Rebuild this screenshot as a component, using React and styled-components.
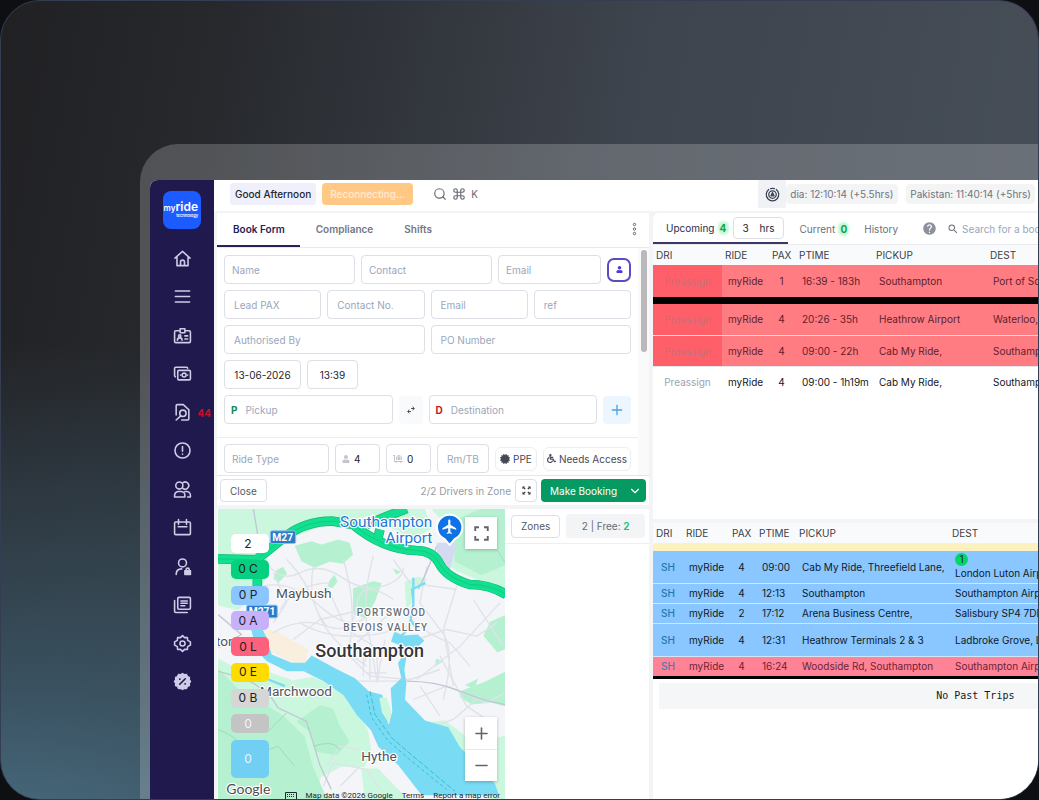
import React, { useState } from 'react';
import styled, { createGlobalStyle, css } from 'styled-components';
import { FaWheelchair, FaCertificate, FaLuggageCart, FaUser } from 'react-icons/fa';
import { FiSearch } from 'react-icons/fi';
import { Command, ChevronDown, Plus, Minus } from 'lucide-react';
import { MdHelp, MdSearch, MdFlight } from 'react-icons/md';

const GlobalStyle = createGlobalStyle`
  * {
    box-sizing: border-box;
  }
  body {
    margin: 0;
    background: #0e0f12;
    font-family: Inter, 'Liberation Sans', sans-serif;
    font-size: 10px;
    line-height: 14px;
    color: #23262f;
  }
  button, input {
    font: inherit;
    color: inherit;
    margin: 0;
  }
  svg {
    display: block;
  }
`;

const Stage = styled.div`
  display: flex;
  height: 100vh;
  padding: 143px 0 0 139px;
  overflow: hidden;
  border: 1px solid #343d52;
  border-radius: 40px;
  background:
    radial-gradient(ellipse 900px 520px at 0% 108%, #4b7186 0%, rgba(66, 98, 117, 0.7) 35%, rgba(50, 70, 85, 0) 100%),
    linear-gradient(100deg, #212124 0%, #26282c 18%, #3e444d 55%, #48505a 100%);
`;

const Device = styled.div`
  display: flex;
  flex: 1;
  min-width: 0;
  padding: 36px 0 0 10px;
  border-top-left-radius: 38px;
  background: rgba(255, 255, 255, 0.2);
`;

const Screen = styled.div`
  display: flex;
  flex: 1;
  min-width: 0;
  overflow: hidden;
  border-top-left-radius: 8px;
  background: #f3f4f6;
`;

const Sidebar = styled.nav`
  display: flex;
  flex-direction: column;
  align-items: center;
  flex: 0 0 64px;
  padding-top: 11px;
  background: #1f194d;
`;

const Logo = styled.a`
  display: flex;
  flex-direction: column;
  align-items: flex-end;
  width: 38px;
  height: 38px;
  margin-bottom: 20px;
  padding: 10px 3px 0 0;
  border-radius: 8px;
  background: #1c5bff;
  color: #fff;
  font-weight: 600;
  line-height: 12px;
  text-decoration: none;
  white-space: nowrap;
`;

const LogoMain = styled.span`
  font-size: 12px;
`;

const LogoSmall = styled.span`
  font-size: 8px;
`;

const LogoSub = styled.span`
  font-size: 4px;
  line-height: 4px;
`;

const NavList = styled.div`
  display: flex;
  flex-direction: column;
  justify-content: space-between;
  height: 442px;
`;

const NavLink = styled.a`
  position: relative;
  color: #cdcbe6;
`;

const NavBadge = styled.span`
  position: absolute;
  top: 3px;
  left: 25px;
  color: #c8102e;
  font-weight: 700;
`;

const Content = styled.div`
  display: flex;
  flex: 1;
  min-width: 0;
  flex-direction: column;
`;

const TopBar = styled.header`
  display: flex;
  align-items: center;
  flex: 0 0 31px;
  margin-bottom: 2px;
  padding: 0 3px 3px 16px;
  background: #fff;
  white-space: nowrap;
  overflow: hidden;
`;

const Greeting = styled.span`
  padding: 4px 5px;
  border-radius: 3px;
  background: #eff0fc;
  font-weight: 500;
`;

const Reconnecting = styled.span`
  margin: 0 20px 0 6px;
  padding: 4px 8px;
  border-radius: 4px;
  background: #ffc985;
  color: #ffe9cf;
  font-weight: 500;
`;

const Shortcut = styled.button`
  display: flex;
  align-items: center;
  gap: 5px;
  padding: 0;
  border: 0;
  background: none;
  color: #666a73;
`;

const ClockGroup = styled.div`
  display: flex;
  align-items: center;
  margin-left: auto;
  color: #6f747e;
`;

const ClockIcon = styled.span`
  display: flex;
  align-items: center;
  justify-content: center;
  width: 28px;
  height: 28px;
  background: #f1f2f5;
  color: #3b4055;
`;

const Clock = styled.span`
  margin-right: 8px;
  padding: 3px 5px 3px 4px;
  border-radius: 4px;
  background: #f3f4f6;

  &:last-child {
    margin-right: 0;
    padding: 3px 4px;
  }
`;

const Workspace = styled.main`
  display: grid;
  grid-template-columns: minmax(0, 432fr) minmax(0, 385fr);
  gap: 4px;
  flex: 1;
  min-height: 0;
  padding-left: 3px;
`;

const Column = styled.div`
  display: flex;
  flex-direction: column;
  gap: 4px;
  min-width: 0;
  min-height: 0;
`;

const Card = styled.section`
  display: flex;
  flex-direction: column;
  overflow: hidden;
  background: #fff;
`;

const Tabs = styled.div`
  display: flex;
  align-items: center;
  height: 35px;
  border-bottom: 1px solid #e8eaee;
`;

const Tab = styled.button`
  align-self: stretch;
  padding: 0 15px 0 16px;
  border: 0;
  border-bottom: 2px solid ${(p) => (p.$active ? '#292258' : 'transparent')};
  background: none;
  color: ${(p) => (p.$active ? '#292258' : '#727782')};
  font-weight: 600;
`;

const MoreButton = styled.button`
  display: flex;
  margin-left: auto;
  padding: 0 12px 3px;
  border: 0;
  background: none;
  color: #666a73;
`;

const FormBody = styled.div`
  display: flex;
`;

const FormRows = styled.form`
  flex: 1;
  min-width: 0;
  padding-top: 7px;
`;

const ScrollTrack = styled.div`
  flex: 0 0 11px;
  padding: 2px 2px 0 3px;
  background: #fafafb;
`;

const ScrollThumb = styled.div`
  height: 102px;
  border-radius: 3px;
  background: #b9b9bb;
`;

const Row = styled.div`
  display: grid;
  grid-template-columns: ${(p) => p.$cols};
  align-items: center;
  gap: 6px;
  padding: 0 7px 6px;
`;

const RideRow = styled(Row)`
  margin-top: 7px;
  padding: 6px 7px 2px;
  border-top: 1px solid #eceef1;
`;

const box = css`
  width: 100%;
  min-width: 0;
  height: 29px;
  border: 1px solid #dcdfe5;
  border-radius: 4px;
  background: #fff;
`;

const Input = styled.input`
  ${box}
  padding: 0 ${(p) => (p.$first ? 7 : 9)}px;
  text-align: ${(p) => (p.$center ? 'center' : 'left')};

  &::placeholder {
    color: #9aa6ba;
    opacity: 1;
  }
`;

const Field = styled.label`
  ${box}
  display: flex;
  align-items: center;
  gap: ${(p) => p.$gap || 4}px;
  padding: 0 6px;
  color: #c3c6cc;

  svg {
    flex-shrink: 0;
  }
`;

const FieldMark = styled.b`
  color: ${(p) => p.$color};
`;

const BareInput = styled.input`
  width: 100%;
  min-width: 0;
  padding: 0;
  border: 0;
  background: none;
  color: #23262f;

  &::placeholder {
    color: #9aa6ba;
    opacity: 1;
  }
`;

const IconButton = styled.button`
  display: flex;
  align-items: center;
  justify-content: center;
  width: 100%;
  height: ${(p) => p.$h || 28}px;
  padding: 0;
  border: ${(p) => p.$border || '0'};
  border-radius: ${(p) => p.$radius || 4}px;
  background: ${(p) => p.$bg || '#fff'};
  color: ${(p) => p.$color};
`;

const Option = styled.button`
  display: flex;
  align-items: center;
  justify-content: center;
  gap: 3px;
  height: 24px;
  padding: 0;
  border: 1px solid #eceef2;
  border-radius: 6px;
  background: #fff;
  color: #454954;
  white-space: nowrap;
`;

const FormFooter = styled.div`
  display: flex;
  align-items: center;
  gap: 4px;
  height: 30px;
  padding: 0 3px;
  border-top: 1px solid #e3e5e9;
  white-space: nowrap;
`;

const OutlineButton = styled.button`
  height: 23px;
  padding: 0 9px;
  border: 1px solid #dcdfe5;
  border-radius: 4px;
  background: #fff;
  color: #555a65;
`;

const Drivers = styled.span`
  margin-left: auto;
  color: #979ba3;
`;

const ExpandWrap = styled.div`
  width: 22px;
`;

const BookButton = styled.button`
  display: flex;
  align-items: center;
  justify-content: space-between;
  width: 105px;
  height: 23px;
  padding: 0 4px 0 9px;
  border: 0;
  border-radius: 4px;
  background: #069a62;
  color: #fff;
`;

const MapArea = styled.div`
  display: grid;
  grid-template-columns: minmax(0, 288fr) minmax(0, 144fr);
  flex: 1;
  min-height: 0;
  background: #fff;
`;

const MapBox = styled.div`
  position: relative;
  overflow: hidden;
  margin-left: 1px;
`;

const MapSvg = styled.svg`
  width: 100%;
  height: 100%;
  font-family: Roboto, sans-serif;
`;

const Counts = styled.div`
  position: absolute;
  top: 25px;
  left: 13px;
  display: flex;
  flex-direction: column;
  justify-content: space-between;
  width: 38px;
  height: 244px;
`;

const Count = styled.button`
  height: ${(p) => (p.$tall ? 38 : 19)}px;
  padding: 0 4px 0 0;
  border: 0;
  border-radius: 5px;
  background: ${(p) => p.$bg};
  color: ${(p) => p.$color || '#1d1f24'};
  font-size: 12px;
`;

const MapControl = styled.div`
  position: absolute;
  right: 8px;
  top: ${(p) => p.$top || 'auto'};
  bottom: ${(p) => p.$bottom || 'auto'};
  width: 32px;
  background: #fff;
  box-shadow: 0 1px 3px rgba(0, 0, 0, 0.25);

  button + button {
    border-top: 1px solid #e8e8e8;
  }
`;

const Attribution = styled.div`
  position: absolute;
  right: 5px;
  bottom: -3px;
  display: flex;
  align-items: center;
  gap: 9px;
  color: #22262c;
  font-family: Roboto, sans-serif;
  font-size: 8px;
  line-height: 12px;
  white-space: nowrap;

  a {
    color: inherit;
    text-decoration: none;
  }
`;

const Zones = styled.div`
  display: flex;
  align-items: center;
  gap: 6px;
  height: 35px;
  padding: 0 4px 0 6px;
  border-bottom: 1px solid #eceef1;
  white-space: nowrap;
`;

const FreeCount = styled.span`
  flex: 1;
  padding: 5px 0;
  border-radius: 4px;
  background: #f3f4f6;
  color: #666b75;
  text-align: center;

  b {
    color: #0fc07a;
    font-weight: 600;
  }
`;

const TripTabs = styled.div`
  display: flex;
  align-items: center;
  height: 32px;
  border-bottom: 1px solid #e8eaee;
  white-space: nowrap;
`;

const TripActive = styled.div`
  display: flex;
  align-items: center;
  align-self: stretch;
  padding: 0 4px 0 8px;
  border-bottom: 2px solid #3b3867;
`;

const TripTab = styled.button`
  display: flex;
  align-items: center;
  gap: 4px;
  padding: ${(p) => (p.$active ? '0 5px' : '0 4px 0 12px')};
  border: 0;
  background: none;
  color: ${(p) => (p.$active ? '#2d2b4e' : '#6c717b')};
`;

const Total = styled.b`
  width: 9px;
  border-radius: 5px;
  background: #c6f9d8;
  box-shadow: 0 0 3px 1px #c6f9d8;
  color: #10a34a;
  line-height: 12px;
`;

const Hours = styled.label`
  display: flex;
  align-items: center;
  width: 51px;
  height: 22px;
  padding: 0 8px 0 9px;
  border: 1px solid #dcdfe5;
  border-radius: 4px;
`;

const TripSearch = styled.label`
  display: flex;
  flex: 1;
  align-items: center;
  gap: 3px;
  min-width: 0;
  margin-left: 10px;
  color: #6c717b;

  svg {
    flex-shrink: 0;
  }
`;

const HelpButton = styled.button`
  display: flex;
  margin-left: 20px;
  padding: 0;
  border: 0;
  background: none;
  color: #8c919b;
`;

const Table = styled.table`
  width: 100%;
  table-layout: fixed;
  border-collapse: collapse;
  white-space: nowrap;
`;

const Th = styled.th`
  height: 20px;
  padding: 0 0 0 3px;
  background: #f8fafc;
  color: #3a3e48;
  font-weight: 400;
  text-align: left;
`;

const Tr = styled.tr`
  height: ${(p) => p.$h}px;
  background: ${(p) => p.$bg};
  color: ${(p) => p.$color || '#14161c'};
  border-bottom: ${(p) => p.$line || '1px solid #e2e5ea'};
`;

const Td = styled.td`
  padding: 0 0 0 6px;
  overflow: hidden;
  text-align: left;
`;

const PaxTd = styled(Td)`
  padding: 0 2px 0 0;
  text-align: center;
`;

const DriverTd = styled(Td)`
  padding: 0;
  background: ${(p) => p.$bg || 'transparent'};
  color: ${(p) => p.$color};
  font-weight: ${(p) => p.$weight || 400};
  text-align: center;
`;

const StopBadge = styled.span`
  display: block;
  width: 13px;
  height: 13px;
  border-radius: 50%;
  background: #00d768;
  line-height: 13px;
  text-align: center;
`;

const UpcomingCard = styled(Card)`
  flex: 0 0 306px;
  border-top-left-radius: 6px;
`;

const ActiveCard = styled(Card)`
  flex: 1;
`;

const NoTrips = styled.p`
  margin: 4px 0 0 6px;
  padding: 6px 0 6px 72%;
  background: #f5f6f7;
  color: #17191e;
  font-family: 'DejaVu Sans Mono', monospace;
  white-space: nowrap;
`;

const stroke = {
  fill: 'none',
  stroke: 'currentColor',
  strokeWidth: 2,
  strokeLinejoin: 'round',
  strokeLinecap: 'round',
};

const navItems = [
  {
    name: 'Home',
    icon: <path d="M2.500 11.500 12 3l9.500 8.500M5 10v11h14V10M9.500 21v-4.500a2.500 2.500 0 0 1 5 0V21" />,
  },
  { name: 'Bookings', icon: <path d="M3 5h18M3 12h18M3 19h18" /> },
  {
    name: 'Drivers',
    icon: (
      <>
        <path d="M9 6H3.500A1.500 1.500 0 0 0 2 7.500v12A1.500 1.500 0 0 0 3.500 21h17a1.500 1.500 0 0 0 1.500-1.500v-12A1.500 1.500 0 0 0 20.500 6H15M9 3.500h6v5H9zM15 12.500h3.500M15 16.500h3.500" />
        <circle cx="8.500" cy="12.500" r="1.500" />
        <path d="M5.500 18c0-4 6-4 6 0" />
      </>
    ),
  },
  {
    name: 'Payments',
    icon: (
      <>
        <rect x="6" y="8" width="16" height="12" rx="1.500" />
        <path d="M3 16a1.500 1.500 0 0 1-1-1.500v-9A1.500 1.500 0 0 1 3.500 4H17a1.500 1.500 0 0 1 1.500 1.500M9.500 14h.1M18.500 14h.1" />
        <circle cx="14" cy="14" r="2.500" />
      </>
    ),
  },
  {
    name: 'Reports',
    badge: '44',
    icon: (
      <>
        <path d="M4 15V3.500A1.500 1.500 0 0 1 5.500 2H13l7 6.500v11.500a1.500 1.500 0 0 1-1.500 1.500H11M4 21.500l5.500-5" />
        <circle cx="12.500" cy="13" r="4" />
      </>
    ),
  },
  {
    name: 'Alerts',
    icon: (
      <>
        <circle cx="12" cy="12" r="9.500" />
        <path d="M12 7v6M12 16.500v.3" />
      </>
    ),
  },
  {
    name: 'Customers',
    icon: (
      <>
        <circle cx="8" cy="7" r="4.500" />
        <path d="M12.500 3.500a4.500 4.500 0 1 1 0 7M2 21.500v-2a5 5 0 0 1 5-5h3a5 5 0 0 1 5 5v2zM15 14.500h2a5 5 0 0 1 5 5v2h-3.500" />
      </>
    ),
  },
  {
    name: 'Calendar',
    icon: <path d="M3.500 5h17A1.500 1.500 0 0 1 22 6.500v13a1.500 1.500 0 0 1-1.500 1.500h-17A1.500 1.500 0 0 1 2 19.500v-13A1.500 1.500 0 0 1 3.500 5zM7 2v6M17 2v6M6.500 11h11" />,
  },
  {
    name: 'Permissions',
    icon: (
      <>
        <circle cx="12" cy="7.500" r="5" />
        <path d="M4 22c0-4 2.500-7 7-7" />
        <path fill="currentColor" d="M15 17.500h7v4.500h-7z" />
        <path d="M16.500 17v-1a2 2 0 0 1 4 0v1" />
      </>
    ),
  },
  {
    name: 'Documents',
    icon: <path d="M7.500 3h13A1.500 1.500 0 0 1 22 4.500v12a1.500 1.500 0 0 1-1.500 1.500h-13A1.500 1.500 0 0 1 6 16.500v-12A1.500 1.500 0 0 1 7.500 3zM2 7v13.500A1.500 1.500 0 0 0 3.500 22H18M10 7.500h8M10 10.500h8M10 13.500h5" />,
  },
  {
    name: 'Settings',
    icon: (
      <>
        <path d="m12 2 2.600 2.600 3.600-.2.300 3.600L22 10v4l-3.500 2-.3 3.600-3.600-.2L12 22l-2.600-2.600-3.600.2-.3-3.600L2 14v-4l3.500-2 .3-3.600 3.600.2z" />
        <circle cx="12" cy="12" r="3.200" />
      </>
    ),
  },
  {
    name: 'Offers',
    icon: (
      <>
        <path
          fill="currentColor"
          d="m12 2 2.200 1.600 2.800-.3 1.100 2.600 2.600 1.100-.3 2.800L22 12l-1.600 2.200.3 2.800-2.600 1.100-1.100 2.600-2.800-.3L12 22l-2.200-1.600-2.800.3-1.100-2.600-2.600-1.100.3-2.800L2 12l1.600-2.200-.3-2.800 2.600-1.100L7 3.300l2.800.3z"
        />
        <path stroke="#1f194d" d="m8.500 15.500 7-7M8.500 9h.3M15.200 15h.3" />
      </>
    ),
  },
];

const upcoming = [
  { pax: 1, time: '16:39 - 183h', pickup: 'Southampton', dest: 'Port of Southampton', late: true, h: 35, line: '7px solid #000' },
  { pax: 4, time: '20:26 - 35h', pickup: 'Heathrow Airport', dest: 'Waterloo, London', late: true, h: 35 },
  { pax: 4, time: '09:00 - 22h', pickup: 'Cab My Ride,', dest: 'Southampton', late: true, h: 31 },
  { pax: 4, time: '09:00 - 1h19m', pickup: 'Cab My Ride,', dest: 'Southampton', h: 31, line: '0' },
];

const active = [
  { pax: 4, time: '09:00', pickup: 'Cab My Ride, Threefield Lane,', dest: 'London Luton Airport', stop: 1, h: 32 },
  { pax: 4, time: '12:13', pickup: 'Southampton', dest: 'Southampton Airport', h: 20 },
  { pax: 2, time: '17:12', pickup: 'Arena Business Centre,', dest: 'Salisbury SP4 7DE', h: 20 },
  { pax: 4, time: '12:31', pickup: 'Heathrow Terminals 2 & 3', dest: 'Ladbroke Grove, London', h: 33 },
  { pax: 4, time: '16:24', pickup: 'Woodside Rd, Southampton', dest: 'Southampton Airport', h: 21, pink: true },
];

const counts = [
  { label: '2', bg: '#fff' },
  { label: '0 C', bg: '#05d07f' },
  { label: '0 P', bg: '#8bc5ff' },
  { label: '0 A', bg: '#c8b1fb' },
  { label: '0 L', bg: '#ff607b' },
  { label: '0 E', bg: '#ffdc00' },
  { label: '0 B', bg: '#d6d6d6' },
  { label: '0', bg: '#c4c4c4', color: '#f4f4f4' },
  { label: '0', bg: '#70cff3', color: '#e9f8ff', tall: true },
];

const headings = ['DRI', 'RIDE', 'PAX', 'PTIME', 'PICKUP', 'DEST'];

const TableHead = ({ widths }) => (
  <>
    <colgroup>
      {widths.map((w, i) => (
        <col key={headings[i]} width={w} />
      ))}
      <col />
    </colgroup>
    <thead>
      <tr>
        {headings.map((h) => (
          <Th key={h} scope="col">{h}</Th>
        ))}
      </tr>
    </thead>
  </>
);

const ExpandIcon = ({ size }) => (
  <svg width={size} height={size} viewBox="0 0 24 24" fill="none" stroke="currentColor" strokeWidth="3">
    <path d="M2 8V2h6M16 2h6v6M22 16v6h-6M8 22H2v-6" />
  </svg>
);

const ArrowsIcon = () => (
  <svg width="9" height="9" viewBox="0 0 20 20" fill="currentColor">
    <path d="M1 1h6L5 3l3 3-2 2-3-3-2 2zM19 1v6l-2-2-3 3-2-2 3-3-2-2zM19 19h-6l2-2-3-3 2-2 3 3 2-2zM1 19v-6l2 2 3-3 2 2-3 3 2 2z" />
  </svg>
);

const motorway = 'M234 178l115 3 90-72q60-45 140-44l60 10q90 75 190 78 50 0 70 40t90 62q60 0 110 30';

const CityMap = () => (
  <MapSvg viewBox="234 27 861 873" preserveAspectRatio="xMidYMid slice" role="img" aria-label="Map of Southampton">
    <path fill="#f4f5f8" d="M234 27h861v873H234z" />
    <g transform="translate(234 27)">
      <g fill="#cbf7de">
        <path d="M0 0h560L470 20 330 45 215 90l-70 60 5 50-30 50-60 55-60-15zM640 0h221v240l-91-30-50-20-45-30 15-100z" />
        <path d="M500 50l90 40 50-30-20-60h-90z" />
        <path d="M0 450l60 30 45-15 60 30 60 20 60-10 105 50 60 110 10 60-20 50-70 0-60 30-20 60 30 38H0z" />
        <path d="M640 640l40-5 60 45 60 20 61-20v193h-50l-60-110-60-70zM560 220l40-15 30 8-40 20-10 50-15 20z" />
        <path d="M430 780l50 0 90 93H440z" />
      </g>
      <g fill="#b5f1d0">
        <path d="M230 112l50-14 30 10 50-15 35 10 10 35-30 28-40-6-45 18-40-20zM175 185l20-10 12 20-25 28-16-12zM335 215l14-16 10 20-16 20-14-6z" />
        <path d="M405 240l60-22 26 6-20 56-28 50-38-15zM861 320l-45 20-20 42 42 50 23-10zM861 490l-60 30-75 28 0 18 35 22 60-6 40 12z" />
        <path d="M0 480l60 60 70 40 70 45 60 60 25 90 35 80 18 18H0z" />
        <path d="M235 640l70-50 40 10 20 50 30 50-40 40-60-10-20-60z" />
        <path d="M700 40l90-40h71v170l-70 30-80-40zM655 450l20 10-25 15zM525 180l25 10-15 8zM740 530l40-20-10 30z" />
      </g>
    </g>
    <path fill="#f9efdf" d="M350 385l60 10 95 55-10 50-25-5-90-45z" />
    <path fill="#d5daf2" d="M890 130l60 0-20 80-40-20z" />
    <g fill="none" stroke="#e0e2ea" strokeWidth="4" strokeLinejoin="round">
      <path d="M380 190q40 60 100 30t120 10q70 50 130 30t60-56M420 330q50-80 150-80M400 400q80-50 160-20t90-60 110-20" />
      <path d="M440 180q60 60 90 150t150 170M520 200q-20 110 40 180M610 180q40 130 20 250M700 170q-40 140-10 250l20 120" />
      <path d="M560 260l60 130 130 80M480 370q100 60 250 30l70-20M630 470l60 60 120 10 90-30M800 340q30 50 130 90l60 70" />
      <path d="M860 200l-20 110 60 80q50 50 10 210M950 260l-40 130 30 170M1080 310l-120 130-130 100M820 600l100-40 120 50 55-30" />
      <path d="M900 470l80 150 90 60M840 560l60 90M1000 300l90 140M760 180l50 70 140 20M550 860l30-70 100 20 40 60M600 860l60-60" />
      <path d="M400 220l40 90-40 60M460 420l80-60 130-30M650 430l90-80M690 440l-20 60M735 420l-25 130M760 440l30 30M370 260q80-20 170 60t140 30" />
      <path d="M670 460v70M690 450v90M710 470l5 70M650 545h160M680 520h60M830 420l90-30 90 20 60-40M880 680l60-20 80-70M560 800l40-60 60 10" />
    </g>
    <g fill="none" stroke="#c0c7d4" strokeWidth="4">
      <path d="M340 27l15 90M234 515l70 20q80 30 110 90l85 40q20 60 40 130l35 75" />
      <path d="M234 345l70 60-70 40M800 545q90 0 160 30t135 40M890 140q-30 80-55 130" />
    </g>
    <g fill="none" stroke="#a2d9bf" strokeWidth="3">
      <path d="M234 690q60 20 100 80l80-30 50 60M440 640l-60 60M520 740q60-20 80 10M1000 100q60 20 95 90" />
    </g>
    <path
      fill="#79dcf4"
      d="M328 370l28-5 24 50 15 50 60 25 40 0 20-22 70 38 60 30 42 40 40 10 18 90 12-40-5-70 32-30-10-45 18-30-4-20-35-15 10-30 26 12 44-3 20 18-20 20-30 8-10 60 6 40-4 50 60 62 70 20 35 60 50 50 55 60 12 34H845l-70-90-60-55-22-50-42-45-40-60-60-42-60-30-50 0-60-30-30-30z"
    />
    <path d="M820 235v80l-12 70-30 30M820 300l-4-30 40-20M810 360l15 20M385 540l50 20" fill="none" stroke="#79dcf4" strokeWidth="7" />
    <path fill="#cbf7de" d="M718 595l22 0 14 40-6 38-22-34z" />
    <path d="M690 575l15 70 50 70 70 60 120 100" fill="none" stroke="#39bfd3" strokeWidth="3" strokeDasharray="16 6" />
    <path d="M680 585l15 70 50 70 70 60 105 85" fill="none" stroke="#39bfd3" strokeWidth="3" strokeDasharray="10 8" />
    <g fill="none" strokeLinejoin="round">
      <path d={`${motorway}M352 180v80M800 27l-120 48M720 90l-10 40`} stroke="#16b877" strokeWidth="29" />
      <path d={`${motorway}M352 180v80M800 27l-120 48M720 90l-10 40`} stroke="#10e08f" strokeWidth="25" />
      <path d={motorway} stroke="#14bf7b" strokeWidth="2" />
    </g>
    <g fill="#2b7cc4" stroke="#8fc0ea" strokeWidth="3">
      <rect x="391" y="94" width="76" height="38" rx="5" />
      <rect x="320" y="317" width="92" height="38" rx="5" />
    </g>
    <g fill="#fff" fontSize="31" fontWeight="700">
      <text x="397" y="124">M27</text>
      <text x="326" y="347">M271</text>
    </g>
    <g stroke="#fff" strokeWidth="7" paintOrder="stroke" strokeLinejoin="round">
      <g fill="#1f78d4" fontSize="46" textAnchor="end">
        <text x="877" y="82">Southampton</text>
        <text x="877" y="130">Airport</text>
      </g>
      <g fill="#50545c" fontSize="41">
        <text x="408" y="294">Maybush</text>
        <text x="360" y="590">Marchwood</text>
        <text x="664" y="784">Hythe</text>
        <text x="228" y="438">ton</text>
      </g>
      <g fill="#6a6e77" fontSize="30" fontWeight="500" letterSpacing="3">
        <text x="650" y="348">PORTSWOOD</text>
        <text x="610" y="395">BEVOIS VALLEY</text>
      </g>
      <text x="526" y="471" fill="#33363c" fontSize="54" fontWeight="500">Southampton</text>
      <text x="259" y="882" fill="#4c4f55" fontSize="42" fontFamily="Lato, sans-serif">Google</text>
    </g>
    <path d="M929 136l-16-18a38 38 0 1 1 32 0z" fill="#0f73e6" stroke="#fff" strokeWidth="6" />
    <MdFlight x="903" y="56" size="52" color="#fff" />
  </MapSvg>
);

const App = () => {
  const [tab, setTab] = useState('Book Form');

  return (
    <>
      <GlobalStyle />
      <Stage>
        <Device>
          <Screen>
            <Sidebar>
              <Logo href="#home">
                <span>
                  <LogoSmall>my</LogoSmall>
                  <LogoMain>ride</LogoMain>
                </span>
                <LogoSub>technology</LogoSub>
              </Logo>
              <NavList>
                {navItems.map((item) => (
                  <NavLink key={item.name} href={`#${item.name}`} aria-label={item.name}>
                    <svg width="19" height="19" viewBox="0 0 24 24" {...stroke}>{item.icon}</svg>
                    {item.badge && <NavBadge>{item.badge}</NavBadge>}
                  </NavLink>
                ))}
              </NavList>
            </Sidebar>

            <Content>
              <TopBar>
                <Greeting>Good Afternoon</Greeting>
                <Reconnecting>Reconnecting...</Reconnecting>
                <Shortcut type="button">
                  <FiSearch size={14} />
                  <Command size={14} />
                  <span>K</span>
                </Shortcut>
                <ClockGroup>
                  <ClockIcon>
                    <svg width="15" height="15" viewBox="0 0 24 24" {...stroke}>
                      <path d="M6 4a10 10 0 1 0 12 0M9 2.500a10 10 0 0 1 6 0" />
                      <circle cx="12" cy="12" r="6" />
                      <path d="m9.500 14 2.500-5 2.500 5z" />
                    </svg>
                  </ClockIcon>
                  <Clock>dia: 12:10:14 (+5.5hrs)</Clock>
                  <Clock>Pakistan: 11:40:14 (+5hrs)</Clock>
                </ClockGroup>
              </TopBar>

              <Workspace>
                <Column>
                  <Card>
                    <Tabs>
                      {['Book Form', 'Compliance', 'Shifts'].map((name) => (
                        <Tab key={name} type="button" $active={tab === name} onClick={() => setTab(name)}>
                          {name}
                        </Tab>
                      ))}
                      <MoreButton type="button" aria-label="More">
                        <svg width="5" height="14" viewBox="0 0 5 14" fill="none" stroke="currentColor">
                          <circle cx="2.500" cy="2.500" r="1.200" />
                          <circle cx="2.500" cy="7" r="1.200" />
                          <circle cx="2.500" cy="11.500" r="1.200" />
                        </svg>
                      </MoreButton>
                    </Tabs>
                    <FormBody>
                      <FormRows>
                        <Row $cols="131fr 131fr 103fr 24px">
                          <Input $first placeholder="Name" aria-label="Name" />
                          <Input $first placeholder="Contact" aria-label="Contact" />
                          <Input $first placeholder="Email" aria-label="Email" />
                          <IconButton type="button" aria-label="Account" $h={24} $radius={7} $border="2px solid #5a4bc4" $color="#4b3fd0">
                            <FaUser size={7} />
                          </IconButton>
                        </Row>
                        <Row $cols="repeat(4, 1fr)">
                          <Input placeholder="Lead PAX" aria-label="Lead PAX" />
                          <Input placeholder="Contact No." aria-label="Contact No." />
                          <Input placeholder="Email" aria-label="Lead email" />
                          <Input placeholder="ref" aria-label="ref" />
                        </Row>
                        <Row $cols="1fr 1fr">
                          <Input placeholder="Authorised By" aria-label="Authorised By" />
                          <Input placeholder="PO Number" aria-label="PO Number" />
                        </Row>
                        <Row $cols="77px 51px">
                          <Input $center defaultValue="13-06-2026" aria-label="Date" />
                          <Input $center defaultValue="13:39" aria-label="Time" />
                        </Row>
                        <Row $cols="1fr 24px 1fr 28px">
                          <Field $gap={8}>
                            <FieldMark $color="#15875a">P</FieldMark>
                            <BareInput placeholder="Pickup" />
                          </Field>
                          <IconButton type="button" aria-label="Swap" $bg="#f9fafb" $color="#4a4e58">
                            <svg width="8" height="8" viewBox="0 0 16 16" {...stroke}>
                              <path d="M9 5h5M12 2l2 3-2 3M7 11H2M4 8l-2 3 2 3" />
                            </svg>
                          </IconButton>
                          <Field $gap={8}>
                            <FieldMark $color="#c01a1f">D</FieldMark>
                            <BareInput placeholder="Destination" />
                          </Field>
                          <IconButton type="button" aria-label="Add stop" $bg="#edf5fe" $color="#4ba3e3">
                            <Plus size={16} />
                          </IconButton>
                        </Row>
                        <RideRow $cols="106fr 45px 45px 52px 42px 88px">
                          <Input $first placeholder="Ride Type" aria-label="Ride Type" />
                          <Field>
                            <FaUser size={8} />
                            <BareInput defaultValue="4" aria-label="Passengers" />
                          </Field>
                          <Field>
                            <FaLuggageCart size={10} />
                            <BareInput defaultValue="0" aria-label="Luggage" />
                          </Field>
                          <Input placeholder="Rm/TB" aria-label="Rm/TB" />
                          <Option type="button">
                            <FaCertificate size={10} />
                            PPE
                          </Option>
                          <Option type="button">
                            <FaWheelchair size={9} />
                            Needs Access
                          </Option>
                        </RideRow>
                      </FormRows>
                      <ScrollTrack>
                        <ScrollThumb />
                      </ScrollTrack>
                    </FormBody>
                    <FormFooter>
                      <OutlineButton type="button">Close</OutlineButton>
                      <Drivers>2/2 Drivers in Zone</Drivers>
                      <ExpandWrap>
                        <IconButton type="button" aria-label="Expand" $h={23} $border="1px solid #dcdfe5" $color="#33363f">
                          <ArrowsIcon />
                        </IconButton>
                      </ExpandWrap>
                      <BookButton type="button">
                        Make Booking
                        <ChevronDown size={14} />
                      </BookButton>
                    </FormFooter>
                  </Card>

                  <MapArea>
                    <MapBox>
                      <CityMap />
                      <Counts>
                        {counts.map((c, i) => (
                          <Count key={i} type="button" $bg={c.bg} $color={c.color} $tall={c.tall}>
                            {c.label}
                          </Count>
                        ))}
                      </Counts>
                      <MapControl $top="8px">
                        <IconButton type="button" aria-label="Full screen" $h={32} $radius={1} $color="#60646b">
                          <ExpandIcon size={15} />
                        </IconButton>
                      </MapControl>
                      <MapControl $bottom="18px">
                        <IconButton type="button" aria-label="Zoom in" $h={32} $radius={1} $color="#60646b">
                          <Plus size={19} />
                        </IconButton>
                        <IconButton type="button" aria-label="Zoom out" $h={32} $radius={1} $color="#60646b">
                          <Minus size={19} />
                        </IconButton>
                      </MapControl>
                      <Attribution>
                        <svg width="12" height="8" viewBox="0 0 12 8" fill="none" stroke="currentColor">
                          <path d="M2 2.500h8M2 4.500h8" strokeDasharray="1 1" />
                          <path d="M.5.5h11v7H.5z" />
                        </svg>
                        <span>Map data ©2026 Google</span>
                        <a href="#terms">Terms</a>
                        <a href="#report">Report a map error</a>
                      </Attribution>
                    </MapBox>
                    <div>
                      <Zones>
                        <OutlineButton type="button">Zones</OutlineButton>
                        <FreeCount>2 | Free: <b>2</b></FreeCount>
                      </Zones>
                    </div>
                  </MapArea>
                </Column>

                <Column>
                  <UpcomingCard>
                    <TripTabs>
                      <TripActive>
                        <TripTab type="button" $active>
                          Upcoming <Total>4</Total>
                        </TripTab>
                        <Hours>
                          <BareInput defaultValue="3" aria-label="Hours ahead" />
                          hrs
                        </Hours>
                      </TripActive>
                      <TripTab type="button">
                        Current <Total>0</Total>
                      </TripTab>
                      <TripTab type="button">History</TripTab>
                      <HelpButton type="button" aria-label="Help">
                        <MdHelp size={15} />
                      </HelpButton>
                      <TripSearch>
                        <MdSearch size={12} />
                        <BareInput placeholder="Search for a booking" />
                      </TripSearch>
                    </TripTabs>
                    <Table>
                      <TableHead widths={[69, 47, 27, 77, 114]} />
                      <tbody>
                        {upcoming.map((t) => (
                          <Tr key={t.time} $h={t.h} $bg={t.late ? '#ff7c82' : '#fff'} $color={t.late ? '#5d2230' : '#14161c'} $line={t.line}>
                            <DriverTd $bg={t.late && '#ff5f68'} $color={t.late ? '#c4727c' : '#9aa3b2'}>Preassign</DriverTd>
                            <Td>myRide</Td>
                            <PaxTd>{t.pax}</PaxTd>
                            <Td>{t.time}</Td>
                            <Td>{t.pickup}</Td>
                            <Td>{t.dest}</Td>
                          </Tr>
                        ))}
                      </tbody>
                    </Table>
                  </UpcomingCard>

                  <ActiveCard>
                    <Table>
                      <TableHead widths={[30, 46, 27, 40, 153]} />
                      <tbody>
                        <Tr $h={8} $bg="#fdf1c0" $line="0">
                          <td colSpan={6} />
                        </Tr>
                        {active.map((t) => (
                          <Tr
                            key={t.time}
                            $h={t.h}
                            $bg={t.pink ? '#ff8296' : '#8ac6ff'}
                            $color={t.pink ? '#6b2438' : '#0d1a2b'}
                            $line={t.pink ? '3px solid #000' : '1px solid #cfe6fb'}
                          >
                            <DriverTd $weight={500} $color={t.pink ? '#4e7aa8' : '#1c7bb0'}>SH</DriverTd>
                            <Td>myRide</Td>
                            <PaxTd>{t.pax}</PaxTd>
                            <Td>{t.time}</Td>
                            <Td>{t.pickup}</Td>
                            <Td>
                              {t.stop && <StopBadge>{t.stop}</StopBadge>}
                              {t.dest}
                            </Td>
                          </Tr>
                        ))}
                      </tbody>
                    </Table>
                    <NoTrips>No Past Trips</NoTrips>
                  </ActiveCard>
                </Column>
              </Workspace>
            </Content>
          </Screen>
        </Device>
      </Stage>
    </>
  );
};

export default App;
